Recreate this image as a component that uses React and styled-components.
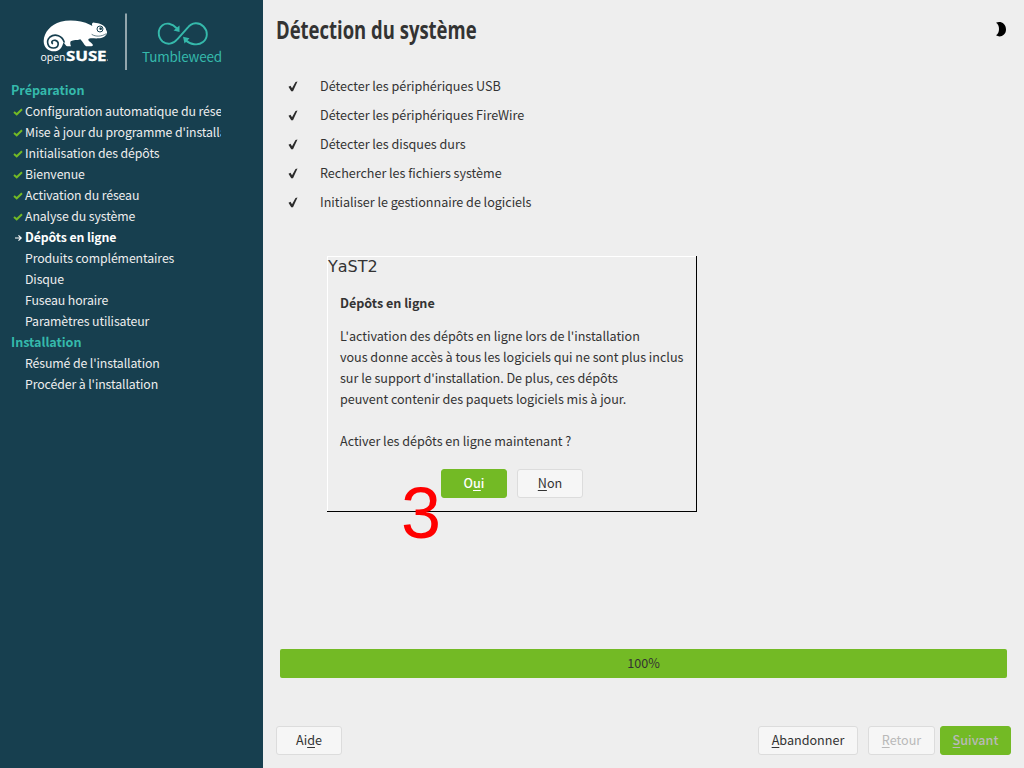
import React from "react";
import styled, { createGlobalStyle } from "styled-components";

const Global = createGlobalStyle`
  * { box-sizing: border-box; }
  body { margin: 0; overflow: hidden; }
`;

const Screen = styled.div`
  position: relative;
  display: flex;
  width: 1024px;
  height: 768px;
  background: #eeeeee;
  color: #333333;
  font-family: "Noto Sans CJK JP", "Noto Sans", sans-serif;
  font-size: 12.6px;
  line-height: 21px;
  letter-spacing: -0.03px;
  white-space: nowrap;
`;

const Sidebar = styled.aside`
  display: flex;
  flex-direction: column;
  width: 263px;
  flex: none;
  background: #173f4f;
  color: #eeeeee;
`;

const Brand = styled.header`
  display: flex;
  height: 80px;
  padding: 13px 0 0 40px;
`;

const Steps = styled.nav`
  width: 221px;
  padding-left: 11px;
  overflow: hidden;
`;

const StepGroup = styled.div`
  height: 21px;
  color: #35b9ab;
  font-weight: 700;
  line-height: 19px;
`;

const Step = styled.div`
  display: flex;
  height: 21px;
  color: ${(p) => (p.$current ? "#ffffff" : "#eeeeee")};
  font-size: 12.3px;
  font-weight: ${(p) => (p.$current ? 700 : 400)};
  line-height: 20px;
  letter-spacing: -0.1px;
`;

const StepMark = styled.span`
  display: flex;
  align-items: center;
  flex: none;
  width: 14px;
  height: 21px;
  padding-left: 2px;
`;

const Main = styled.main`
  display: flex;
  flex-direction: column;
  flex: 1;
  padding: 0 13px;
`;

const TitleBar = styled.header`
  display: flex;
  justify-content: space-between;
  height: 72px;
  padding-top: 11px;
`;

const Title = styled.h1`
  margin: 0;
  font: 700 25px/36px "Open Sans", sans-serif;
  letter-spacing: 0;
  transform: scaleX(0.739);
  transform-origin: left;
`;

const Moon = styled.svg`
  margin: 10px 4px 0 0;
`;

const Tasks = styled.ul`
  flex: 1;
  margin: 0;
  padding: 0 0 0 11px;
  list-style: none;
`;

const Task = styled.li`
  display: flex;
  align-items: center;
  height: 29px;
  gap: 20px;
`;

const TaskLabel = styled.span`
  padding-bottom: 2px;
`;

const Progress = styled.div`
  height: 29px;
  margin: 0 4px 48px;
  border-radius: 2px;
  background: #73ba25;
  line-height: 27px;
  text-align: center;
`;

const Actions = styled.footer`
  display: flex;
  height: 42px;
`;

const Button = styled.button`
  width: ${(p) => p.$width || 66}px;
  height: 29px;
  margin: 0 0 0 ${(p) => p.$gap || 0};
  padding: 0 0 2px;
  border: 1px solid ${(p) => (p.$primary ? "#73ba25" : "#dcdcdc")};
  border-radius: 3px;
  background: ${(p) => (p.$primary ? "#73ba25" : "#f6f6f6")};
  color: ${(p) => (p.$disabled ? "#b9b9b9" : p.$primary ? "#ffffff" : "#333333")};
  font: inherit;
  font-weight: ${(p) => (p.$primary ? 500 : 400)};
  line-height: 25px;
  u { text-underline-offset: 2px; text-decoration-skip-ink: none; }
`;

const Dialog = styled.section`
  position: absolute;
  left: 327px;
  top: 256px;
  width: 370px;
  height: 256px;
  padding: 1px 0 0 1px;
  border: solid #000000;
  border-width: 0 1px 1px 0;
  box-shadow: inset 1px 1px #ffffff;
`;

const WindowTitle = styled.div`
  height: 35px;
  font: 16px/19px "DejaVu Sans", sans-serif;
  font-kerning: none;
  letter-spacing: 0;
`;

const DialogBody = styled.div`
  padding-left: 12px;
`;

const DialogHeading = styled.h2`
  margin: 0 0 12px;
  font-size: inherit;
  font-weight: 700;
`;

const Message = styled.p`
  margin: 0;
  white-space: pre;
`;

const DialogActions = styled.div`
  display: flex;
  gap: 10px;
  margin: 18px 0 0 101px;
`;

const Marker = styled.div`
  position: absolute;
  left: 401px;
  top: 473px;
  color: #ff0000;
  font: 72px/80px "Liberation Sans", sans-serif;
`;

const steps = [
  { group: "Préparation" },
  { label: "Configuration automatique du réseau", state: "done" },
  { label: "Mise à jour du programme d'installation", state: "done" },
  { label: "Initialisation des dépôts", state: "done" },
  { label: "Bienvenue", state: "done" },
  { label: "Activation du réseau", state: "done" },
  { label: "Analyse du système", state: "done" },
  { label: "Dépôts en ligne", state: "current" },
  { label: "Produits complémentaires" },
  { label: "Disque" },
  { label: "Fuseau horaire" },
  { label: "Paramètres utilisateur" },
  { group: "Installation" },
  { label: "Résumé de l'installation" },
  { label: "Procéder à l'installation" },
];

const tasks = [
  "Détecter les périphériques USB",
  "Détecter les périphériques FireWire",
  "Détecter les disques durs",
  "Rechercher les fichiers système",
  "Initialiser le gestionnaire de logiciels",
];

const message = `L'activation des dépôts en ligne lors de l'installation
vous donne accès à tous les logiciels qui ne sont plus inclus
sur le support d'installation. De plus, ces dépôts
peuvent contenir des paquets logiciels mis à jour.

Activer les dépôts en ligne maintenant ?`;

function Logo() {
  return (
    <svg width="184" height="58" viewBox="40 13 184 58">
      <g transform="translate(30 5) scale(.33333)">
        <path
          fill="#fff"
          d="M72 139C54 139 41 127 41 108C42 82 62 58 92 50C120 43 155 47 180 59L187 63C184 57 187 52 193 53C208 54 224 60 227 70C228 77 232 79 231 84C228 95 217 99 205 100C190 101 180 97 175 103C174 108 181 111 187 117C190 120 189 124 184 124L168 124C161 119 158 109 151 103C141 107 130 104 122 109C119 115 122 120 123 124L114 124C107 124 105 115 100 113C96 128 88 139 72 139Z"
        />
        <path
          fill="none"
          stroke="#173f4f"
          strokeWidth="5"
          d="M103 113C98 92 75 84 60 96C46 109 54 130 71 129C87 128 89 110 76 106C66 104 62 113 69 116"
        />
        <circle cx="210" cy="72" r="9" fill="none" stroke="#173f4f" strokeWidth="3" />
        <circle cx="212" cy="71" r="4" fill="#173f4f" />
        <path d="M185 88C198 96 214 95 229 86" fill="none" stroke="#173f4f" strokeWidth="2" />
      </g>
      <text x="40.5" y="60.5" fill="#fff" fontFamily="Open Sans" fontSize="11.5" textLength="25" lengthAdjust="spacingAndGlyphs">open</text>
      <text x="66" y="60.5" fill="#fff" stroke="#fff" strokeWidth=".3" fontFamily="Open Sans" fontWeight="700" fontSize="13.5" textLength="40.5" lengthAdjust="spacingAndGlyphs">SUSE</text>
      <circle cx="107.5" cy="60" r=".5" fill="#fff" />
      <path d="M126 13.5V70" stroke="#b3c0c5" strokeWidth="1.6" />
      <g fill="none" stroke="#35b9ab" strokeWidth="1.9">
        <path d="M177 28.5C172 23 166 22.5 162.500 25.2C157.500 29 157.500 37 162.500 41.500C167 45 173 44.500 177.500 39L187.500 28C192 22 199 22 203.500 26.500C208 31 208 38 203 42C198 46 190 44.500 185.500 40" />
      </g>
      <path fill="#35b9ab" d="M179.500 25.500V32L173.500 30.500ZM183 36.700L189.500 38.200L184.500 43.500Z" />
      <text x="142" y="61.500" fill="#35b9ab" fontFamily="Noto Sans CJK JP" fontSize="13.500" textLength="80" lengthAdjust="spacing">Tumbleweed</text>
    </svg>
  );
}

const StepCheck = () => (
  <svg width="10" height="8" viewBox="0 0 10 8">
    <path d="M1 4L3.700 6.300L9 1.300" fill="none" stroke="#73ba25" strokeWidth="2" />
  </svg>
);

const StepArrow = () => (
  <svg width="10" height="8" viewBox="0 0 10 8">
    <path d="M2 4H8M5.500 1.300L8.200 4L5.500 6.700" fill="none" stroke="#fff" strokeWidth="1.200" />
  </svg>
);

const TaskCheck = () => (
  <svg width="13" height="13" viewBox="0 0 13 13">
    <path d="M1.500 6.800L3.500 5.800L5 8.200L8.500 2L10.500 1.400L6 11.200H4.200Z" fill="#2b2b2b" />
  </svg>
);

export default function App() {
  return (
    <Screen>
      <Global />
      <Sidebar>
        <Brand><Logo /></Brand>
        <Steps>
          {steps.map((s) =>
            s.group ? (
              <StepGroup key={s.group}>{s.group}</StepGroup>
            ) : (
              <Step key={s.label} $current={s.state === "current"}>
                <StepMark>
                  {s.state === "done" && <StepCheck />}
                  {s.state === "current" && <StepArrow />}
                </StepMark>
                {s.label}
              </Step>
            )
          )}
        </Steps>
      </Sidebar>
      <Main>
        <TitleBar>
          <Title>Détection du système</Title>
          <Moon width="12" height="16" viewBox="0 0 12 16">
            <path d="M1 1.800C5-.5 11 2 11 8.500C11 14.500 5 17 1 14.300C5 12 5 4 1 1.800Z" fill="#000" />
          </Moon>
        </TitleBar>
        <Tasks>
          {tasks.map((t) => (
            <Task key={t}><TaskCheck /><TaskLabel>{t}</TaskLabel></Task>
          ))}
        </Tasks>
        <Progress>100%</Progress>
        <Actions>
          <Button>Ai<u>d</u>e</Button>
          <Button $width={100} $gap="auto"><u>A</u>bandonner</Button>
          <Button $width={67} $gap="10px" $disabled><u>R</u>etour</Button>
          <Button $width={71} $gap="5px" $primary $disabled><u>S</u>uivant</Button>
        </Actions>
      </Main>
      <Dialog>
        <WindowTitle>YaST2</WindowTitle>
        <DialogBody>
          <DialogHeading>Dépôts en ligne</DialogHeading>
          <Message>{message}</Message>
          <DialogActions>
            <Button $primary>O<u>u</u>i</Button>
            <Button><u>N</u>on</Button>
          </DialogActions>
        </DialogBody>
      </Dialog>
      <Marker>3</Marker>
    </Screen>
  );
}
